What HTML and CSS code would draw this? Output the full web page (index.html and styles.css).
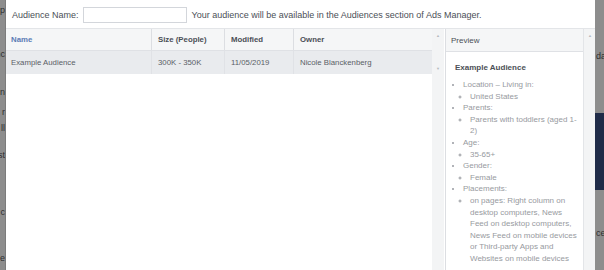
FILE: index.html
```html
<!DOCTYPE html>
<html>
<head>
<meta charset="utf-8">
<link rel="stylesheet" href="styles.css">
</head>
<body>
<div class="screen">
  <div class="backdrop bd-left">
    <span class="frag f1">ip</span>
    <span class="frag f2">nc</span>
    <span class="frag f3">n</span>
    <span class="frag f4">r</span>
    <span class="frag f5">ll</span>
    <span class="frag f6">st</span>
    <span class="frag f7">c</span>
    <span class="frag f8">e</span>
  </div>
  <div class="modal">
    <div class="namebar">
      <label class="name-label">Audience Name:</label>
      <input class="name-input" type="text">
      <span class="name-hint">Your audience will be available in the Audiences section of Ads Manager.</span>
    </div>
    <div class="content">
      <div class="table">
        <div class="row head">
          <div class="cell c-name">Name</div>
          <div class="cell">Size (People)</div>
          <div class="cell">Modified</div>
          <div class="cell">Owner</div>
        </div>
        <div class="row selected">
          <div class="cell">Example Audience</div>
          <div class="cell">300K - 350K</div>
          <div class="cell">11/05/2019</div>
          <div class="cell">Nicole Blanckenberg</div>
        </div>
      </div>
      <div class="vscroll table-scroll">
        <span class="arrow up">&#9650;</span>
        <span class="arrow down">&#9660;</span>
      </div>
      <div class="preview">
        <div class="preview-head">Preview</div>
        <div class="preview-body">
          <div class="preview-title">Example Audience</div>
          <ul class="lvl1">
            <li>Location – Living in:
              <ul class="lvl2"><li>United States</li></ul>
            </li>
            <li>Parents:
              <ul class="lvl2"><li>Parents with toddlers (aged 1-2)</li></ul>
            </li>
            <li>Age:
              <ul class="lvl2"><li>35-65+</li></ul>
            </li>
            <li>Gender:
              <ul class="lvl2"><li>Female</li></ul>
            </li>
            <li>Placements:
              <ul class="lvl2"><li>on pages: Right column on desktop computers, News Feed on desktop computers, News Feed on mobile devices or Third-party Apps and Websites on mobile devices</li></ul>
            </li>
          </ul>
        </div>
      </div>
      <div class="vscroll preview-scroll">
        <span class="arrow up">&#9650;</span>
      </div>
    </div>
  </div>
  <div class="backdrop bd-right">
    <span class="frag r1">dat</span>
    <div class="navy"></div>
    <span class="frag r2">ce</span>
  </div>
</div>
</body>
</html>
```
FILE: styles.css
```css
* { box-sizing: border-box; }
html, body { margin: 0; padding: 0; }
body {
  width: 604px;
  height: 270px;
  overflow: hidden;
  font-family: "Liberation Sans", Arial, sans-serif;
  background: #8c8c8c;
}
.screen {
  display: flex;
  width: 604px;
  height: 270px;
}
.backdrop {
  position: relative;
  background: #8d8d8d;
  overflow: hidden;
  color: #2f2f2f;
  font-size: 9px;
}
.bd-left {
  width: 6px;
  flex: none;
  border-right: 1px solid #7c7c7c;
}
.bd-right {
  width: 9px;
  flex: none;
}
.frag {
  position: absolute;
  line-height: 10px;
  white-space: nowrap;
}
.bd-left .frag { right: 0; }
.f1 { top: 5px; }
.f2 { top: 49px; }
.f3 { top: 87px; }
.f4 { top: 107px; }
.f5 { top: 123px; }
.f6 { top: 150px; }
.f7 { top: 207px; }
.f8 { top: 253px; }
.bd-right .frag { left: 1px; }
.r1 { top: 51px; }
.r2 { top: 228px; }
.navy {
  position: absolute;
  left: 0;
  top: 113px;
  width: 9px;
  height: 77px;
  background: #1f2b48;
}
.modal {
  width: 589px;
  flex: none;
  background: #fff;
  display: flex;
  flex-direction: column;
}
.namebar {
  height: 29px;
  flex: none;
  display: flex;
  align-items: center;
  padding: 1px 0 0 6px;
  font-size: 9px;
  color: #4b4f56;
  border-bottom: 1px solid #e3e5e8;
}
.name-input {
  width: 104px;
  height: 16px;
  margin: 0 5px 0 4px;
  border: 1px solid #d3d6db;
  padding: 0;
  background: #fff;
}
.content {
  flex: 1;
  display: flex;
  min-height: 0;
}
.table {
  width: 426px;
  flex: none;
  font-size: 7.8px;
  color: #4b4f56;
}
.row {
  display: grid;
  grid-template-columns: 145px 73px 69px 139px;
  height: 23px;
}
.row.head {
  height: 22px;
  background: #f5f6f7;
  border-bottom: 1px solid #dfe1e5;
  font-weight: bold;
}
.row.selected {
  background: #e9ebee;
  color: #5a5e66;
}
.cell {
  display: flex;
  align-items: center;
  padding-left: 6px;
  white-space: nowrap;
  border-left: 1px solid #dcdee2;
}
.cell:first-child {
  border-left: none;
  padding-left: 5px;
}
.row.selected .cell { border-left-color: #e0e2e6; }
.c-name { color: #5b7cb5; }
.vscroll {
  flex: none;
  position: relative;
  background: #f3f4f5;
  color: #b5b8bd;
  font-size: 4px;
}
.table-scroll { width: 12px; margin-right: 1px; }
.preview-scroll { width: 12px; }
.arrow {
  position: absolute;
  left: 4px;
  line-height: 4px;
}
.arrow.up { top: 5px; }
.arrow.down { top: 38px; }
.preview {
  width: 139px;
  flex: none;
  background: #fff;
  border-left: 1px solid #dcdee2;
  border-right: 1px solid #e3e5e8;
  display: flex;
  flex-direction: column;
}
.preview-head {
  height: 23px;
  flex: none;
  display: flex;
  align-items: center;
  padding-left: 5px;
  background: #f5f6f7;
  border-bottom: 1px solid #dfe1e5;
  font-size: 8px;
  color: #4b4f56;
}
.preview-body {
  padding: 10px 6px 0 9px;
}
.preview-title {
  font-size: 8px;
  font-weight: bold;
  color: #4b4f56;
  line-height: 12px;
  margin-bottom: 5px;
}
.preview-body ul {
  margin: 0;
  list-style-position: outside;
}
.lvl1 {
  padding-left: 8px;
  list-style-type: disc;
  font-size: 8px;
  line-height: 11.6px;
  color: #979aa0;
}
.lvl2 {
  padding-left: 7px;
  list-style-type: circle;
}
```
